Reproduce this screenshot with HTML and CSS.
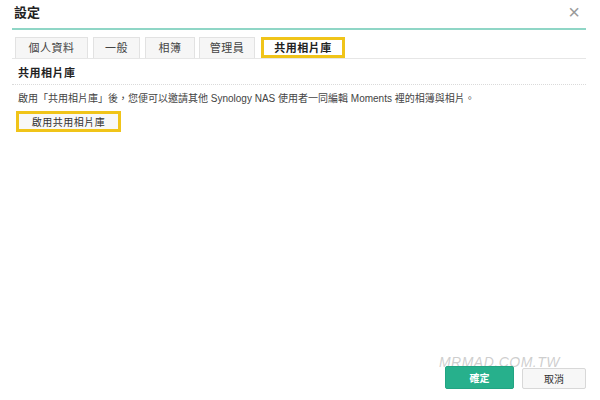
FILE: index.html
```html
<!DOCTYPE html>
<html>
  <head>
    <link rel="stylesheet" href="styles.css">
  </head>
  <body>
    <div class="dialog">
      <div class="dialog-header">
        <span class="dialog-title">設定</span>
        <button type="button" class="dialog-close">&times;</button>
      </div>
      <ul class="tabs">
        <li class="tab tab-profile">個人資料</li>
        <li class="tab tab-general">一般</li>
        <li class="tab tab-album">相簿</li>
        <li class="tab tab-admin">管理員</li>
        <li class="tab tab-active mark">共用相片庫</li>
      </ul>
      <div class="section">
        <div class="section-title">共用相片庫</div>
        <p class="section-text">啟用「共用相片庫」後，您便可以邀請其他 Synology NAS 使用者一同編輯 Moments 裡的相簿與相片。</p>
        <button type="button" class="btn btn-enable mark">啟用共用相片庫</button>
      </div>
      <div class="dialog-footer">
        <span class="watermark">MRMAD.COM.TW</span>
        <div class="footer-buttons">
          <button type="button" class="btn btn-primary">確定</button>
          <button type="button" class="btn btn-cancel">取消</button>
        </div>
      </div>
    </div>
  </body>
</html>
```

FILE: styles.css
```css
html, body {
  margin: 0;
  padding: 0;
  background: #fff;
}
body {
  font: 11px/1.4 "Liberation Sans", "Noto Sans CJK TC", sans-serif;
  color: #333;
}
.dialog {
  width: 574px;
  height: 400px;
  padding: 0 14px 0 12px;
  display: flex;
  flex-direction: column;
}
.dialog-header {
  height: 28px;
  display: flex;
  align-items: center;
  justify-content: space-between;
  border-bottom: 2px solid #8fd6c6;
}
.dialog-title {
  font-size: 13px;
  font-weight: bold;
  color: #222;
  padding-left: 2px;
  margin-top: -2px;
}
.dialog-close {
  border: none;
  background: none;
  font-size: 20px;
  font-weight: 300;
  color: #9a9a9a;
  padding: 0 6px;
  margin-top: -4px;
  line-height: 1;
}
.tabs {
  list-style-type: none;
  margin: 7px 0 0 0;
  padding: 0 0 0 3px;
  display: flex;
  gap: 5px;
  border-bottom: 1px solid #e6e6e6;
  height: 21px;
}
.tab {
  box-sizing: border-box;
  height: 21px;
  border: 1px solid #e2e2e2;
  border-bottom: 0;
  background: #f6f6f6;
  font-size: 11px;
  line-height: 20px;
  text-align: center;
  color: #444;
  letter-spacing: 0.5px;
}
.tab-profile { width: 73px; }
.tab-general { width: 47px; }
.tab-album { width: 50px; }
.tab-admin { width: 56px; margin-left: -1px; }
.tab-active {
  width: 84px;
  background: #fff;
  font-weight: bold;
  color: #222;
}
.btn {
  font: 10px "Liberation Sans", "Noto Sans CJK TC", sans-serif;
  color: #333;
  background: #f6f6f6;
  border: 1px solid #d8d8d8;
  border-radius: 2px;
  height: 22px;
  padding: 0 14px;
}
.mark,
.btn.mark {
  border: 3px solid #f0c419;
}
.tab.mark {
  line-height: 16px;
  margin-left: 1px;
}
.section {
  padding: 0 0 0 6px;
}
.section-title {
  font-size: 11px;
  font-weight: bold;
  color: #222;
  padding: 7px 0 3px;
  border-bottom: 1px dotted #dadada;
  margin-left: -6px;
  padding-left: 6px;
  letter-spacing: 0.5px;
}
.section-text {
  margin: 7px 0 5px 0;
  font-size: 10px;
  color: #444;
}
.btn-enable {
  margin-left: -2px;
  width: 105px;
  height: 21px;
  padding: 0;
  border-radius: 0;
  background: #f8f8f8;
  letter-spacing: 0.5px;
}
.dialog-footer {
  margin-top: auto;
  margin-bottom: 11px;
  display: flex;
  flex-direction: column;
  align-items: flex-end;
}
.watermark {
  margin-right: 26px;
  margin-bottom: -2px;
  font-size: 14px;
  line-height: 12px;
  letter-spacing: 0.5px;
  color: rgba(185, 185, 185, 0.7);
  font-style: italic;
  text-shadow: 0 0 1px #fff;
  pointer-events: none;
}
.footer-buttons {
  display: flex;
  align-items: flex-end;
  gap: 8px;
}
.btn-primary {
  background: #27b08c;
  border: 1px solid #22a482;
  color: #fff;
  width: 69px;
  height: 23px;
  font-weight: bold;
}
.btn-cancel {
  width: 64px;
  height: 21px;
  background: #f7f7f7;
}
```
